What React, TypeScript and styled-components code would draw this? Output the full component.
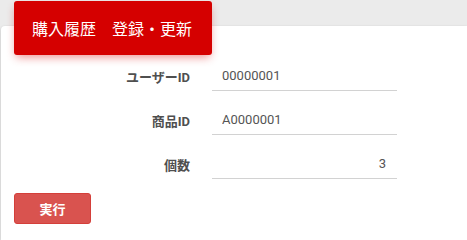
import React from 'react';
import styled, { createGlobalStyle } from 'styled-components';

const GlobalStyle = createGlobalStyle`
  html, body {
    margin: 0;
    padding: 0;
    height: 100%;
    background-color: #ebebeb;
    font-family: Roboto, "Noto Sans CJK JP", sans-serif;
    overflow: hidden;
  }
  #root {
    height: 100%;
  }
`;

const Page = styled.div`
  height: 100%;
  box-sizing: border-box;
  padding: 26px 0 0 1px;
  display: flex;
  flex-direction: column;
`;

const Card = styled.div`
  flex: 1;
  background: #fff;
  border-radius: 4px 0 0 0;
  box-shadow: 0 1px 3px rgba(0, 0, 0, 0.2);
`;

const CardHeader = styled.div`
  display: flex;
  align-items: center;
  width: 198px;
  height: 54px;
  margin: -25px 0 0 13px;
  padding-left: 18px;
  box-sizing: border-box;
  background-color: #d50000;
  border-radius: 3px;
  box-shadow: 0 4px 10px -2px rgba(213, 0, 0, 0.45);
`;

const CardTitle = styled.h2`
  margin: 0;
  color: #fff;
  font-size: 16px;
  font-weight: 400;
  white-space: pre;
`;

const Form = styled.div`
  display: flex;
  flex-direction: column;
  gap: 14px;
  margin-top: 6px;
`;

const Row = styled.div`
  display: grid;
  grid-template-columns: 189px 185px;
  column-gap: 22px;
  align-items: center;
`;

const Label = styled.label`
  text-align: right;
  font-size: 13px;
  font-weight: 700;
  color: #4f4f4f;
`;

const Input = styled.input<{ $right?: boolean }>`
  height: 30px;
  box-sizing: border-box;
  border: none;
  border-bottom: 1px solid #d2d2d2;
  padding: 0 11px 0 10px;
  font-family: Roboto, "Noto Sans CJK JP", sans-serif;
  font-size: 13px;
  color: #555;
  background: transparent;
  outline: none;
  text-align: ${p => (p.$right ? 'right' : 'left')};
`;

const Actions = styled.div`
  display: flex;
  padding: 14px 0 0 13px;
`;

const RunButton = styled.button`
  width: 77px;
  height: 31px;
  border: 1px solid #d43f3a;
  border-radius: 3px;
  background-color: #d9534f;
  color: #fff;
  font-family: Roboto, "Noto Sans CJK JP", sans-serif;
  font-size: 13px;
  font-weight: 700;
  cursor: pointer;
`;

const App: React.FC = () => {
  return (
    <>
      <GlobalStyle />
      <Page>
        <Card>
          <CardHeader>
            <CardTitle>購入履歴　登録・更新</CardTitle>
          </CardHeader>
          <Form>
            <Row>
              <Label>ユーザーID</Label>
              <Input defaultValue="00000001" />
            </Row>
            <Row>
              <Label>商品ID</Label>
              <Input defaultValue="A0000001" />
            </Row>
            <Row>
              <Label>個数</Label>
              <Input defaultValue="3" $right />
            </Row>
          </Form>
          <Actions>
            <RunButton>実行</RunButton>
          </Actions>
        </Card>
      </Page>
    </>
  );
};

export default App;
